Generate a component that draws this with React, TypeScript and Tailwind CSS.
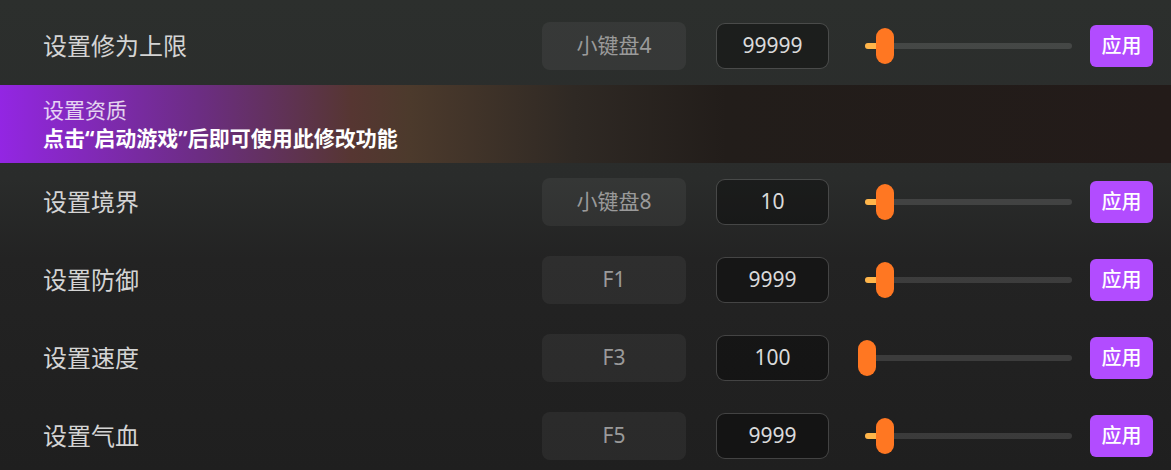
import React from 'react';

interface Row {
  label: string;
  hotkey: string;
  value: string;
  pos: number; // thumb offset on the track, px
}

const rows: Row[] = [
  { label: '设置境界', hotkey: '小键盘8', value: '10', pos: 11 },
  { label: '设置防御', hotkey: 'F1', value: '9999', pos: 11 },
  { label: '设置速度', hotkey: 'F3', value: '100', pos: -7 },
  { label: '设置气血', hotkey: 'F5', value: '9999', pos: 11 },
];

const Slider: React.FC<{ pos: number }> = ({ pos }) => (
  <div className="relative ml-[36px] h-[36px] w-[207px] flex items-center">
    <div className="h-[6px] w-full rounded-full bg-white/[0.12]" />
    <div className="absolute left-0 top-[15px] h-[6px] rounded-l-full bg-[#ffb54a]" style={{ width: Math.max(pos + 9, 0) }} />
    <div className="absolute top-0 h-[36px] w-[18px] rounded-[9px] bg-[#ff7722]" style={{ left: pos }} />
  </div>
);

const SettingRow: React.FC<{ row: Row }> = ({ row }) => (
  <div className="flex h-[78px] items-center pl-[43px] pr-[18px]">
    <div className="flex-1 text-[24px] text-[#d4d4d4]">{row.label}</div>
    <div className="flex h-[48px] w-[144px] items-center justify-center rounded-[8px] bg-white/[0.05] text-[21px] text-[#9a9a9a]">
      {row.hotkey}
    </div>
    <div className="ml-[30px] flex h-[46px] w-[113px] items-center justify-center rounded-[9px] border-[1.5px] border-white/[0.2] bg-black/[0.35] text-[21px] text-[#dadada]">
      {row.value}
    </div>
    <Slider pos={row.pos} />
    <button className="ml-[18px] h-[42px] w-[63px] rounded-[6px] bg-[#b24cff] text-[20px] font-medium text-white">
      应用
    </button>
  </div>
);

export default function App() {
  return (
    <div
      className="h-[470px] w-[1171px] overflow-hidden bg-[linear-gradient(to_bottom,#2c2f2d_0%,#2a2c2b_38%,#232323_55%,#1f1f1f_100%)] pt-[7px]"
      style={{ fontFamily: '"Noto Sans", "Noto Sans CJK SC", sans-serif' }}
    >
      <SettingRow row={{ label: '设置修为上限', hotkey: '小键盘4', value: '99999', pos: 11 }} />

      {/* locked row */}
      <div className="flex h-[78px] flex-col justify-center bg-[linear-gradient(to_right,#9326e3_0%,#6c2d83_17%,#563632_30%,#4c3a2c_35%,#2f2924_49%,#221d1a_62%,#231b19_100%)] pl-[43px]">
        <div className="text-[21px] leading-[28px] text-white/80">设置资质</div>
        <div className="text-[21px] font-bold leading-[28px] text-white">点击“启动游戏”后即可使用此修改功能</div>
      </div>

      {rows.map(r => (
        <SettingRow key={r.label} row={r} />
      ))}
    </div>
  );
}
